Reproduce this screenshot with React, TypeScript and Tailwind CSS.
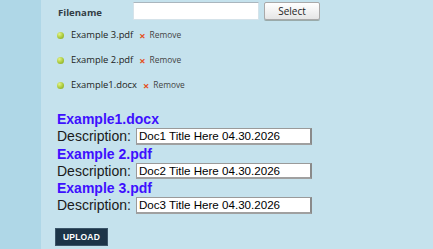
import React from 'react';

const files = ['Example 3.pdf', 'Example 2.pdf', 'Example1.docx'];

const docs = [
  { name: 'Example1.docx', desc: 'Doc1 Title Here 04.30.2026' },
  { name: 'Example 2.pdf', desc: 'Doc2 Title Here 04.30.2026' },
  { name: 'Example 3.pdf', desc: 'Doc3 Title Here 04.30.2026' },
];

const Bullet = () => (
  <span className="inline-block w-[7px] h-[7px] rounded-full bg-[radial-gradient(circle_at_35%_30%,#e4f28a_0%,#a9c93b_55%,#7e9f1f_100%)]" />
);

export default function App() {
  return (
    <div className="flex min-h-[249px] w-full bg-[#c5e2ed]">
      {/* left strip */}
      <div className="w-[41px] shrink-0 bg-[#afd7e7]" />

      <div className="flex-1 pl-[16px] pt-[1.5px]">
        {/* Filename row */}
        <div className="flex items-center h-[19px]" style={{ fontFamily: '"Open Sans", "Noto Sans", sans-serif' }}>
          <span className="w-[76px] pl-[1px] mt-[4px] text-[9.6px] font-bold text-[#333d45]">Filename</span>
          <input
            type="text"
            className="w-[126px] h-[18px] bg-white border border-[#d5e3ea] border-t-[#aab6be] outline-none"
          />
          <button className="ml-[5px] w-[56px] h-[18px] rounded-[2px] border border-[#a9a9a9] bg-gradient-to-b from-white to-[#e6e6e6] text-[10px] text-[#222] leading-none shadow-[0_1px_0_#9aa]">
            Select
          </button>
        </div>

        {/* file list */}
        <ul className="mt-[2px]" style={{ fontFamily: '"Open Sans", "Noto Sans", sans-serif' }}>
          {files.map((f) => (
            <li key={f} className="flex items-center h-[25px]">
              <Bullet />
              <span className="ml-[7px] text-[9.4px] text-[#222]">{f}</span>
              <span className="ml-[6px] text-[11px] font-bold text-[#e4501c] leading-none">×</span>
              <span className="ml-[4px] text-[8.4px] text-[#444]">Remove</span>
            </li>
          ))}
        </ul>

        {/* descriptions */}
        <div className="mt-[12.5px]" style={{ fontFamily: '"Liberation Sans", Arial, sans-serif' }}>
          {docs.map((d) => (
            <div key={d.name}>
              <div className="h-[18px] leading-[18px] text-[14px] font-bold text-[#3d10ff]">{d.name}</div>
              <div className="flex items-center h-[16.5px]">
                <span className="text-[14px] text-[#1a1a1a] leading-none">Description:</span>
                <input
                  type="text"
                  defaultValue={d.desc}
                  className="ml-[5px] w-[176px] h-[16.5px] bg-white px-[2px] text-[11.6px] text-black border border-[#9a9a9a] border-r-[2px] border-b-[2px] border-r-[#8a8a8a] border-b-[#a0a0a0] outline-none"
                  style={{ fontFamily: '"Liberation Sans", Arial, sans-serif' }}
                />
              </div>
            </div>
          ))}
        </div>

        <button
          className="mt-[14.5px] -ml-[2px] w-[53px] h-[18px] bg-[#1c3448] border border-[#3b5468] text-white text-[8.5px] font-bold tracking-[0.2px]"
          style={{ fontFamily: '"Liberation Sans", Arial, sans-serif' }}
        >
          UPLOAD
        </button>
      </div>
    </div>
  );
}
